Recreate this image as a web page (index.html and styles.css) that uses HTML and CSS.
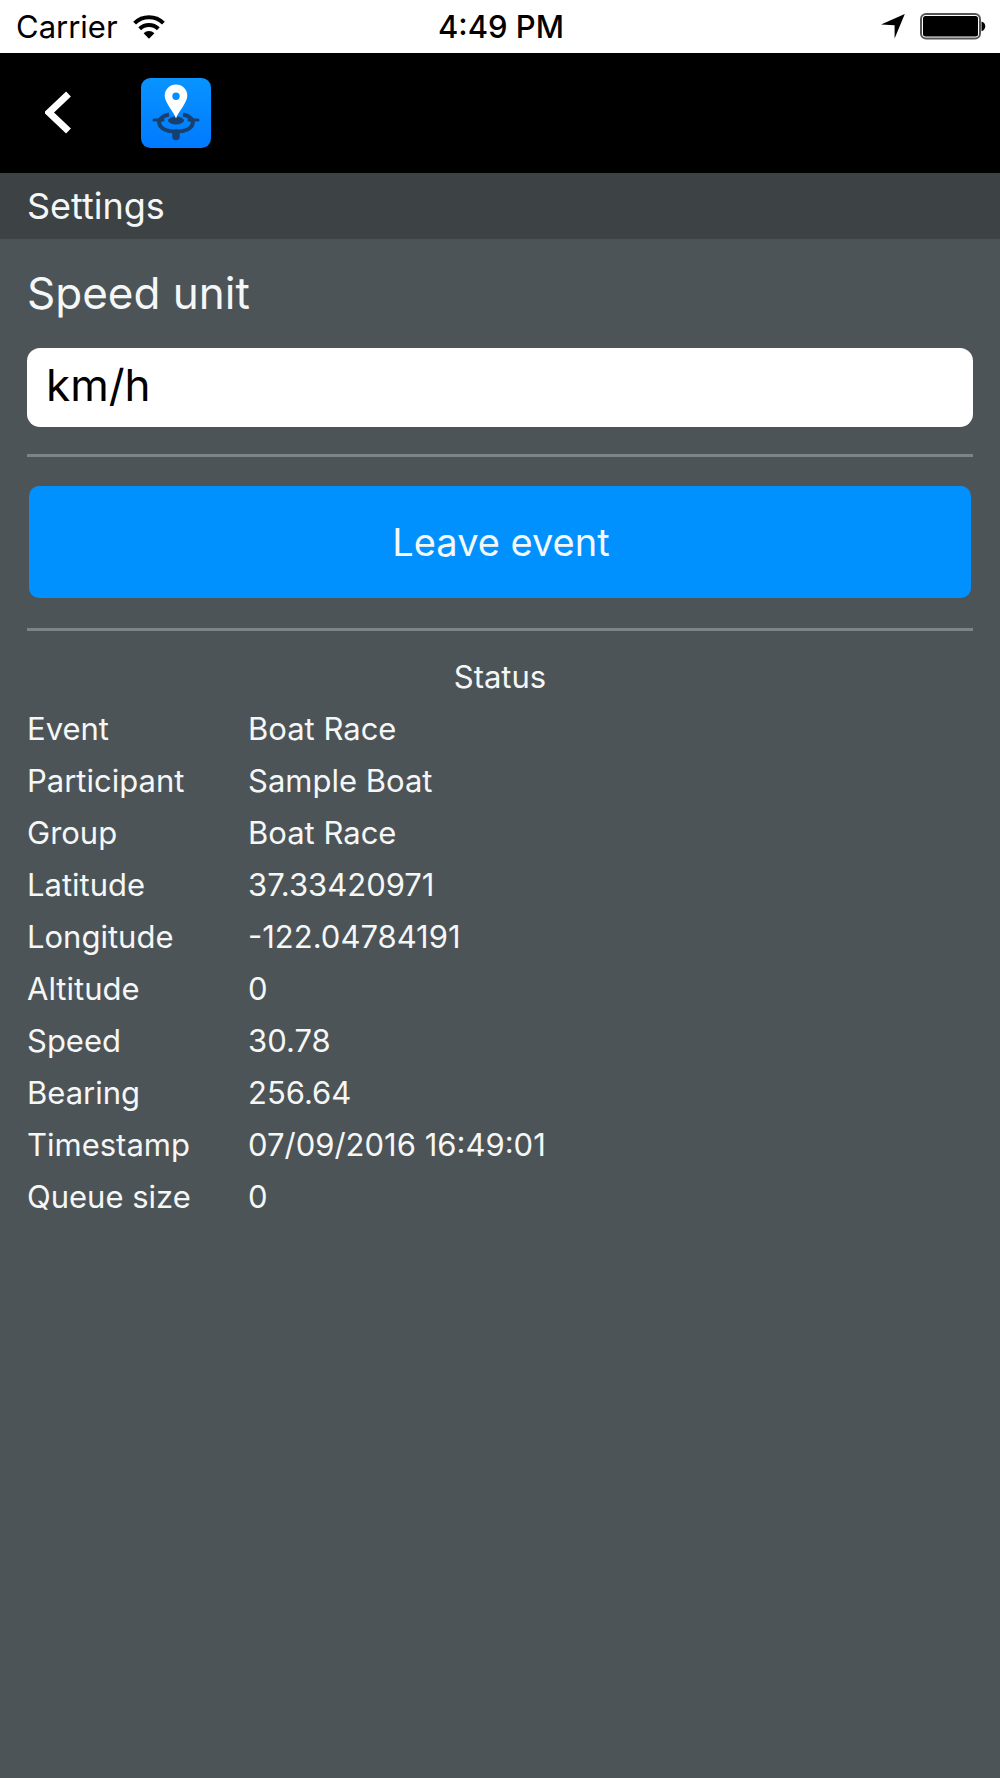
FILE: index.html
```html
<!DOCTYPE html>
<html lang="en">
<head>
    <meta charset="UTF-8">
    <meta name="viewport" content="width=device-width, initial-scale=1.0">
    <title>Settings</title>
    <link rel="stylesheet" href="styles.css">
</head>
<body>
    <div class="status_bar">
        <div class="status_left">
            <span class="carrier">Carrier</span>
            <svg class="wifi" width="32" height="24" viewBox="0 0 32 24">
                <path d="M1.6 8.2a20.5 20.5 0 0 1 28.8 0" fill="none" stroke="#000" stroke-width="4"/>
                <path d="M6.7 13.7a13.3 13.3 0 0 1 18.6 0" fill="none" stroke="#000" stroke-width="4"/>
                <path d="M10.6 18.3a7.7 7.7 0 0 1 10.8 0L16 23.8z"/>
            </svg>
        </div>
        <span class="clock">4:49 PM</span>
        <div class="status_right">
            <svg width="24" height="25" viewBox="0 0 24 25"><path d="M23.8 0L13.6 24.6V11.2L0 10.6z"/></svg>
            <svg width="66" height="27" viewBox="0 0 66 27">
                <rect x="1" y="1" width="59" height="24.6" rx="5" fill="#fff" stroke="#555" stroke-width="2"/>
                <rect x="3" y="3" width="55" height="20.6" rx="2.5"/>
                <path d="M61.5 8.5c5 1 5 8.700 0 9.700z"/>
            </svg>
        </div>
    </div>

    <div class="header">
        <svg class="back" width="27" height="44" viewBox="0 0 27 44"><path d="M23.500 3L4 21.500l19.500 18.500" fill="none" stroke="#fff" stroke-width="7"/></svg>
        <svg class="logo" width="70" height="70" viewBox="0 0 70 70">
            <defs>
                <linearGradient id="blue" x1="0" y1="0" x2="0" y2="1">
                    <stop offset="0" stop-color="#0894ff"/>
                    <stop offset="1" stop-color="#007aff"/>
                </linearGradient>
            </defs>
            <rect width="70" height="70" rx="9.500" fill="url(#blue)"/>
            <g fill="none" stroke="#17406f">
                <path d="M28 36.500C14 39 14 53.500 35 53.500S56 39 42 36.500" stroke-width="4"/>
                <path d="M13 42h9M48 42h9" stroke-width="3" stroke-linecap="round"/>
                <path d="M35 55v3.500" stroke-width="7.500" stroke-linecap="round"/>
            </g>
            <ellipse cx="35" cy="42.500" rx="8" ry="4" fill="#17406f"/>
            <path fill="#fff" fill-rule="evenodd" d="M35 40.500C33 34 23.700 25 23.700 17.500a11.300 11 0 0 1 22.600 0C46.300 25 37 34 35 40.500zM35 14.500a3.700 3.700 0 1 0 0 7.400a3.700 3.700 0 1 0 0-7.400z"/>
        </svg>
    </div>

    <div class="title_bar">Settings</div>

    <div class="content">
        <div class="label">Speed unit</div>
        <div class="select">km/h</div>
        <hr>
        <button class="leave">Leave event</button>
        <hr>
        <div class="status_title">Status</div>
        <div class="status_table">
            <span>Event</span><span>Boat Race</span>
            <span>Participant</span><span>Sample Boat</span>
            <span>Group</span><span>Boat Race</span>
            <span>Latitude</span><span>37.33420971</span>
            <span>Longitude</span><span>-122.04784191</span>
            <span>Altitude</span><span>0</span>
            <span>Speed</span><span>30.78</span>
            <span>Bearing</span><span>256.64</span>
            <span>Timestamp</span><span>07/09/2016 16:49:01</span>
            <span>Queue size</span><span>0</span>
        </div>
    </div>
</body>
</html>
```
FILE: styles.css
```css
*{
    box-sizing:border-box;
}

body{
    margin:0;
    min-height:1778px;
    background:#4d5457;
    color:#f5f7f7;
    font-family:Inter, "Liberation Sans", sans-serif;
}

svg{
    display:block;
}

.status_bar{
    height:53px;
    padding:0 14px 0 16px;
    background:#fff;
    color:#000;
    display:grid;
    grid-template-columns:1fr auto 1fr;
    align-items:center;
    line-height:53px;
}

.status_left{
    display:flex;
    align-items:center;
    gap:15px;
}

.carrier{
    font-size:31px;
}

.clock{
    font-size:31px;
    font-weight:500;
}

.status_right{
    display:flex;
    justify-content:flex-end;
    align-items:center;
    gap:15px;
}

.header{
    height:120px;
    padding-left:45px;
    background:#000;
    display:flex;
    align-items:center;
    gap:69px;
}

.title_bar{
    height:66px;
    padding-left:27px;
    background:#3d4245;
    font-size:36px;
    line-height:66px;
}

.content{
    padding:0 27px;
}

.label{
    height:109px;
    font-size:44px;
    line-height:108px;
}

.select{
    height:79px;
    padding-left:19px;
    background:#fff;
    border-radius:13px;
    color:#000;
    font-size:44px;
    line-height:74px;
}

hr{
    height:3px;
    margin:27px 0 29px;
    border:0;
    background:#7b8587;
}

.leave{
    display:block;
    width:942px;
    height:112px;
    margin:0 2px 30px;
    padding:0 0 0 2px;
    border:0;
    border-radius:10px;
    background:#0091ff;
    color:#f5f7f7;
    font-family:inherit;
    font-size:38px;
}

.leave + hr{
    margin:0 0 20px;
}

.status_title,
.status_table{
    font-size:31px;
    line-height:52px;
}

.status_title{
    text-align:center;
}

.status_table{
    display:grid;
    grid-template-columns:221px 1fr;
}
```
